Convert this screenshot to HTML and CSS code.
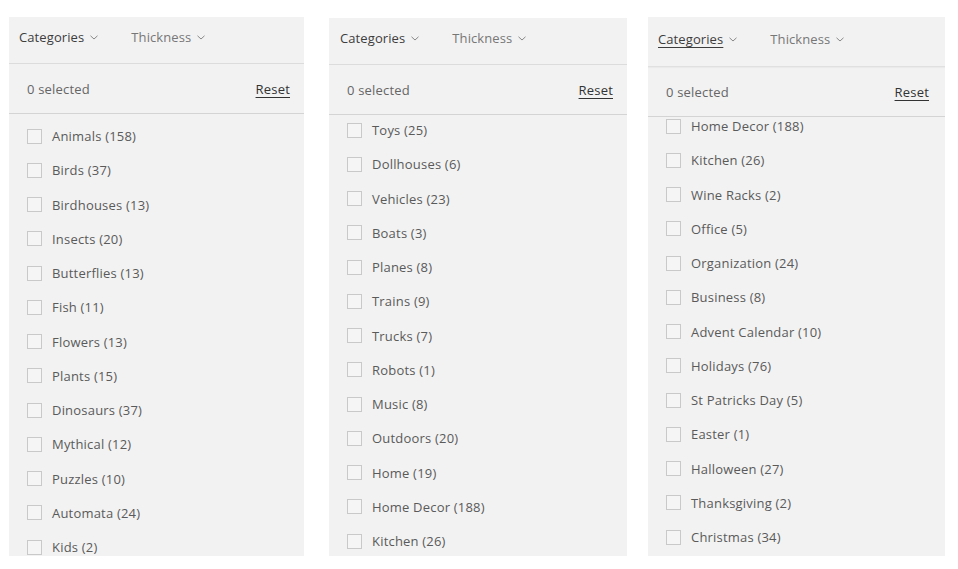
FILE: index.html
```html
<!DOCTYPE html>
<html>
<head>
<meta charset="utf-8">
<link rel="stylesheet" href="styles.css">
</head>
<body>
<div class="board">
  <section class="panel panel-a">
    <div class="tabs">
      <span class="tab tab-active">Categories <svg class="chev" viewBox="0 0 8 5"><path d="M0.5 0.8 L4 4 L7.5 0.8"/></svg></span>
      <span class="tab">Thickness <svg class="chev" viewBox="0 0 8 5"><path d="M0.5 0.8 L4 4 L7.5 0.8"/></svg></span>
    </div>
    <div class="status"><span>0 selected</span><a class="reset">Reset</a></div>
    <div class="list"><ul class="items items-a">
      <li><span class="box"></span>Animals (158)</li>
      <li><span class="box"></span>Birds (37)</li>
      <li><span class="box"></span>Birdhouses (13)</li>
      <li><span class="box"></span>Insects (20)</li>
      <li><span class="box"></span>Butterflies (13)</li>
      <li><span class="box"></span>Fish (11)</li>
      <li><span class="box"></span>Flowers (13)</li>
      <li><span class="box"></span>Plants (15)</li>
      <li><span class="box"></span>Dinosaurs (37)</li>
      <li><span class="box"></span>Mythical (12)</li>
      <li><span class="box"></span>Puzzles (10)</li>
      <li><span class="box"></span>Automata (24)</li>
      <li><span class="box"></span>Kids (2)</li>
    </ul></div>
  </section>
  <section class="panel panel-b">
    <div class="tabs">
      <span class="tab tab-active">Categories <svg class="chev" viewBox="0 0 8 5"><path d="M0.5 0.8 L4 4 L7.5 0.8"/></svg></span>
      <span class="tab">Thickness <svg class="chev" viewBox="0 0 8 5"><path d="M0.5 0.8 L4 4 L7.5 0.8"/></svg></span>
    </div>
    <div class="status"><span>0 selected</span><a class="reset">Reset</a></div>
    <div class="list"><ul class="items items-b">
      <li><span class="box"></span>Toys (25)</li>
      <li><span class="box"></span>Dollhouses (6)</li>
      <li><span class="box"></span>Vehicles (23)</li>
      <li><span class="box"></span>Boats (3)</li>
      <li><span class="box"></span>Planes (8)</li>
      <li><span class="box"></span>Trains (9)</li>
      <li><span class="box"></span>Trucks (7)</li>
      <li><span class="box"></span>Robots (1)</li>
      <li><span class="box"></span>Music (8)</li>
      <li><span class="box"></span>Outdoors (20)</li>
      <li><span class="box"></span>Home (19)</li>
      <li><span class="box"></span>Home Decor (188)</li>
      <li><span class="box"></span>Kitchen (26)</li>
    </ul></div>
  </section>
  <section class="panel panel-c">
    <div class="tabs">
      <span class="tab tab-active"><u>Categories</u> <svg class="chev" viewBox="0 0 8 5"><path d="M0.5 0.8 L4 4 L7.5 0.8"/></svg></span>
      <span class="tab">Thickness <svg class="chev" viewBox="0 0 8 5"><path d="M0.5 0.8 L4 4 L7.5 0.8"/></svg></span>
    </div>
    <div class="status"><span>0 selected</span><a class="reset">Reset</a></div>
    <div class="list"><ul class="items items-c">
      <li><span class="box"></span>Home Decor (188)</li>
      <li><span class="box"></span>Kitchen (26)</li>
      <li><span class="box"></span>Wine Racks (2)</li>
      <li><span class="box"></span>Office (5)</li>
      <li><span class="box"></span>Organization (24)</li>
      <li><span class="box"></span>Business (8)</li>
      <li><span class="box"></span>Advent Calendar (10)</li>
      <li><span class="box"></span>Holidays (76)</li>
      <li><span class="box"></span>St Patricks Day (5)</li>
      <li><span class="box"></span>Easter (1)</li>
      <li><span class="box"></span>Halloween (27)</li>
      <li><span class="box"></span>Thanksgiving (2)</li>
      <li><span class="box"></span>Christmas (34)</li>
    </ul></div>
  </section>
</div>
</body>
</html>
```

FILE: styles.css
```css
html, body {
  margin: 0;
  padding: 0;
  background: #ffffff;
}
body {
  font-family: "Open Sans", "Liberation Sans", sans-serif;
  font-size: 13px;
  color: #555;
  width: 958px;
  height: 569px;
  overflow: hidden;
}
.board {
  display: flex;
  align-items: flex-start;
  padding-left: 9px;
}
.panel {
  background: #f2f2f2;
  display: flex;
  flex-direction: column;
  overflow: hidden;
}
.panel-a { width: 295px; margin-top: 17px; height: 539px; }
.panel-b { width: 298px; margin-top: 18px; height: 538px; margin-left: 25px; }
.panel-c { width: 297px; margin-top: 17px; height: 539px; margin-left: 21px; }

.tabs {
  display: flex;
  align-items: center;
  gap: 33px;
  height: 40px;
  padding: 0 0 6px 10px;
  border-bottom: 1px solid #dcdcdc;
  flex: none;
}
.panel-b .tabs { padding-left: 11px; }
.panel-c .tabs { height: 44px; padding-bottom: 5px; border-bottom-color: #e0e0e0; box-shadow: 0 1px 1px rgba(0,0,0,0.03); }
.tab {
  color: #777;
  display: inline-flex;
  align-items: center;
  gap: 6px;
  letter-spacing: 0.1px;
}
.tab-active { color: #3d3d3d; }
.tab u { text-decoration-thickness: 1px; text-underline-offset: 3px; }
.chev {
  width: 8px;
  height: 5px;
  fill: none;
  stroke: #888;
  stroke-width: 1;
  margin-top: 1px;
}
.status {
  display: flex;
  justify-content: space-between;
  align-items: center;
  height: 49px;
  padding: 0 14px 0 18px;
  border-bottom: 1px solid #d4d4d4;
  flex: none;
  color: #666;
  letter-spacing: 0.2px;
}
.panel-c .status { padding-right: 16px; }
.reset {
  color: #333;
  text-decoration: underline;
  text-decoration-thickness: 1px;
  text-underline-offset: 3px;
}
.list {
  flex: 1;
  overflow: hidden;
}
.items {
  list-style: none;
  margin: 0;
  padding: 0 0 0 18px;
}
.items-a { margin-top: 5px; }
.items-b { margin-top: -2px; }
.items-c { margin-top: -8px; }
.items li {
  height: 34.25px;
  display: flex;
  align-items: center;
  gap: 10px;
  color: #5a5a5a;
  letter-spacing: 0.2px;
}
.box {
  width: 13px;
  height: 13px;
  border: 1px solid #c9c9c9;
  background: #f5f5f5;
  flex: none;
}
```
